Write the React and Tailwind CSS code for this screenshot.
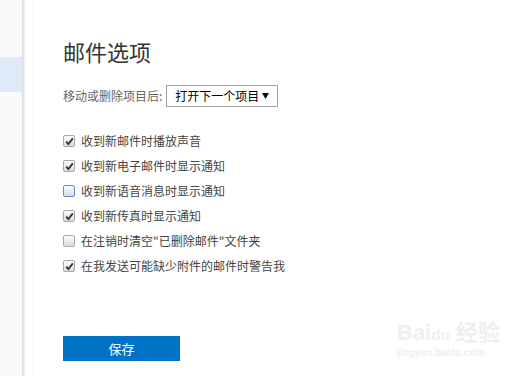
import React from 'react';

const font = { fontFamily: '"Noto Sans CJK SC", "Noto Sans", sans-serif' };

const options = [
  { label: '收到新邮件时播放声音', checked: true },
  { label: '收到新电子邮件时显示通知', checked: true },
  { label: '收到新语音消息时显示通知', checked: false, focus: true },
  { label: '收到新传真时显示通知', checked: true },
  { label: '在注销时清空"已删除邮件"文件夹', checked: false },
  { label: '在我发送可能缺少附件的邮件时警告我', checked: true },
];

function Box({ checked, focus }) {
  return (
    <span
      className={`flex h-[12px] w-[12px] shrink-0 items-center justify-center rounded-[2px] border bg-gradient-to-b from-[#fcfcfc] to-[#dcdcdc] ${
        focus ? 'border-[#5b8fd6]' : 'border-[#a8a8a8]'
      }`}
    >
      {checked && (
        <svg width="9" height="9" viewBox="0 0 9 9">
          <path d="M1.2 4.6 L3.4 7 L7.8 1.4" fill="none" stroke="#333" strokeWidth="1.8" />
        </svg>
      )}
    </span>
  );
}

export default function App() {
  return (
    <div className="relative flex h-[376px] w-[519px] overflow-hidden bg-white" style={font}>
      {/* Sidebar */}
      <div className="w-[22px] shrink-0 bg-[#fafafa] pt-[57px]">
        <div className="h-[35px] bg-[#deeaf8]" />
      </div>
      <div className="w-[3px] shrink-0 bg-gradient-to-r from-[#d8d8d8] to-[#f6f6f6]" />

      {/* Main */}
      <div className="flex flex-1">
        <div className="w-[9px] shrink-0 border-r border-[#f3f3f3]" />
        <div className="flex flex-1 flex-col pl-[29px]">
          <h1 className="mt-[36px] text-[22px] leading-[30px] text-[#333]">邮件选项</h1>

          <div className="mt-[19px] flex items-center">
            <span className="whitespace-nowrap text-[12px] text-[#666]">移动或删除项目后:</span>
            <div className="ml-[4px] flex h-[22px] w-[112px] items-center justify-between whitespace-nowrap border border-[#a0a0a0] pl-[8px] pr-[8px] text-[12px] text-black">
              <span>打开下一个项目</span>
              <svg width="7" height="6" viewBox="0 0 7 6">
                <path d="M0 0 H7 L3.5 6 Z" fill="#111" />
              </svg>
            </div>
          </div>

          <div className="mt-[25px] flex flex-col gap-[7px]">
            {options.map((o) => (
              <label key={o.label} className="flex h-[18px] items-center gap-[6px]">
                <Box checked={o.checked} focus={o.focus} />
                <span className="whitespace-nowrap text-[12px] text-[#444]">{o.label}</span>
              </label>
            ))}
          </div>

          <button className="mt-[61px] h-[25px] w-[117px] bg-[#0072c6] text-[13px] text-white">
            保存
          </button>
        </div>
      </div>

      {/* Watermark */}
      <div className="pointer-events-none absolute left-[397px] top-[321px] flex flex-col items-start text-[#efefef]">
        <span className="text-[22px] font-bold leading-[24px]" style={{ fontFamily: '"Liberation Sans", "Noto Sans CJK SC", sans-serif' }}>
          Bai<span className="text-[15px]">du</span> 经验
        </span>
        <span className="text-[10px] font-bold leading-[12px]" style={{ fontFamily: '"Liberation Sans", sans-serif' }}>
          jingyan.baidu.com
        </span>
      </div>
    </div>
  );
}
